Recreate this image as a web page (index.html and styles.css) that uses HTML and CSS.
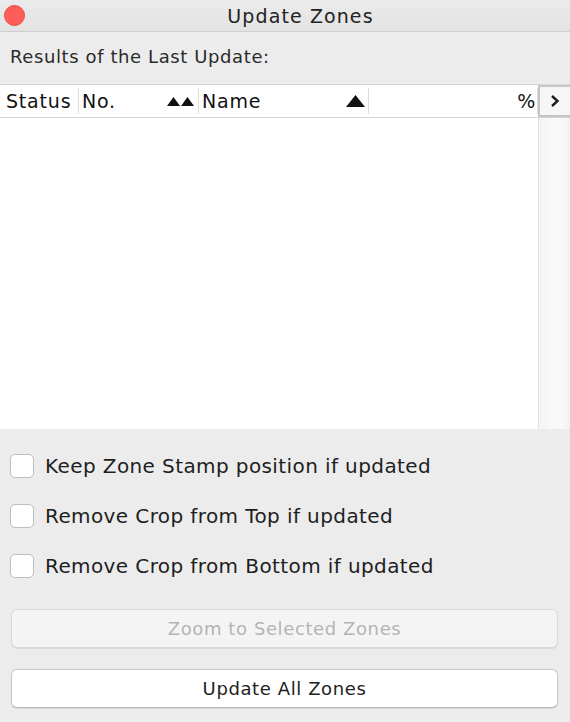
FILE: index.html
```html
<!DOCTYPE html>
<html lang="en">
<head>
    <meta charset="UTF-8">
    <title>Update Zones</title>
    <link rel="stylesheet" href="styles.css">
</head>
<body>
    <div class="window">
        <div class="titlebar">
            <span class="close"></span>
            <span class="title">Update Zones</span>
        </div>

        <div class="section-label">Results of the Last Update:</div>

        <div class="table">
            <div class="table-head">
                <div class="col col-status">Status</div>
                <div class="col col-no">No.
                    <svg class="sort" width="28" height="9" viewBox="0 0 28 9">
                        <path d="M0 9 L6.5 0 L13 9 Z M14 9 L20.5 0 L27 9 Z" fill="#111"/>
                    </svg>
                </div>
                <div class="col col-name">Name
                    <svg class="sort" width="19" height="12" viewBox="0 0 19 12">
                        <path d="M0 12 L9.5 0 L19 12 Z" fill="#111"/>
                    </svg>
                </div>
                <div class="col col-pct">%</div>
                <div class="col col-more">
                    <svg width="12" height="14" viewBox="0 0 12 14">
                        <path d="M3 2 L8.5 7 L3 12" fill="none" stroke="#1c1c1c" stroke-width="2.4"/>
                    </svg>
                </div>
            </div>
            <div class="table-body">
                <div class="rows"></div>
                <div class="scroll-track"></div>
            </div>
        </div>

        <div class="options">
            <label class="option"><span class="box"></span>Keep Zone Stamp position if updated</label>
            <label class="option"><span class="box"></span>Remove Crop from Top if updated</label>
            <label class="option"><span class="box"></span>Remove Crop from Bottom if updated</label>
        </div>

        <div class="buttons">
            <button class="btn" disabled>Zoom to Selected Zones</button>
            <button class="btn">Update All Zones</button>
        </div>
    </div>
</body>
</html>
```

FILE: styles.css
```css
:root {
    --window-bg: #ececec;
    --text: #262626;
    --line: #d6d6d6;
    --sep: #dcdcdc;
}

* {
    box-sizing: border-box;
}

body {
    margin: 0;
    font-family: 'DejaVu Sans', 'Liberation Sans', sans-serif;
    background-color: var(--window-bg);
    color: var(--text);
}
.window {
    width: 570px;
    height: 722px;
    display: flex;
    flex-direction: column;
}
.titlebar {
    height: 32px;
    display: flex;
    align-items: center;
    justify-content: center;
    position: relative;
    background: linear-gradient(#ebebeb, #e3e3e3);
    border-bottom: 1px solid #cfcfcf;
}
.close {
    position: absolute;
    left: 4px;
    top: 5px;
    width: 21px;
    height: 21px;
    border-radius: 50%;
    background-color: #fe5e57;
    border: 1px solid #e9493f;
}
.title {
    font-size: 19px;
    letter-spacing: 1.1px;
    color: #222222;
    padding-left: 31px;
}
.section-label {
    height: 52px;
    padding: 14px 0 0 10px;
    font-size: 18px;
    letter-spacing: 0.6px;
    color: #2b2b2b;
}
.table {
    background-color: #ffffff;
    border-top: 1px solid var(--line);
    height: 345px;
    display: flex;
    flex-direction: column;
}
.table-head {
    display: flex;
    height: 33px;
    border-bottom: 1px solid var(--line);
    font-size: 19px;
    letter-spacing: 0.8px;
    color: #111111;
}
.col {
    display: flex;
    align-items: center;
    border-right: 1px solid #dedede;
    margin: 3px 0;
    padding-left: 4px;
}
.col-status {
    width: 79px;
    padding-left: 6px;
}
.col-no {
    width: 120px;
    padding-left: 3px;
}
.col-name {
    width: 170px;
    padding-left: 3px;
}
.col-pct {
    flex: 1;
    justify-content: flex-end;
    padding-right: 1px;
}
.sort {
    margin-left: auto;
    margin-right: 3px;
}
.col-more {
    width: 32px;
    margin: 0;
    border: 2px solid #c4c4c4;
    border-top-color: #c8c8c8;
    border-right: none;
    background-color: #f6f6f6;
    justify-content: center;
    padding-left: 0;
}
.table-body {
    flex: 1;
    display: flex;
}
.rows {
    flex: 1;
}
.scroll-track {
    width: 32px;
    border-left: 1px solid #e2e2e2;
    background: linear-gradient(to right, #f3f3f3, #f9f9f9 40%, #f9f9f9 70%, #f2f2f2);
}
.options {
    display: flex;
    flex-direction: column;
    gap: 26px;
    padding: 25px 0 0 10px;
}
.option {
    display: flex;
    align-items: center;
    gap: 11px;
    font-size: 20px;
    letter-spacing: 0.4px;
    color: #1e1e1e;
    height: 24px;
}
.box {
    width: 24px;
    height: 24px;
    border: 1px solid #bdbdbd;
    border-radius: 5px;
    background-color: #ffffff;
}
.buttons {
    display: flex;
    flex-direction: column;
    gap: 21px;
    padding: 31px 12px 0 11px;
}
.btn {
    height: 39px;
    width: 100%;
    font-family: inherit;
    font-size: 18px;
    letter-spacing: 0.6px;
    color: #222222;
    background-color: #ffffff;
    border: 1px solid #c6c6c6;
    border-bottom-color: #b5b5b5;
    border-radius: 6px;
    box-shadow: 0 1px 1px rgba(0, 0, 0, 0.08);
}
.btn:disabled {
    color: #b4b4b4;
    background-color: #f4f4f4;
    border-color: #d9d9d9;
}
```
